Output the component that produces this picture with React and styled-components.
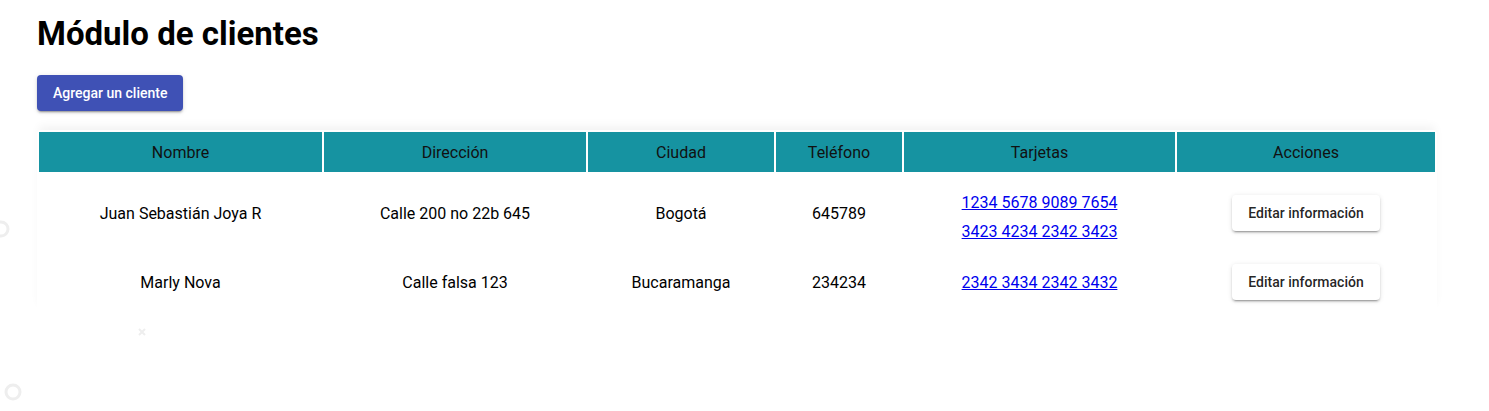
import React from "react";
import styled, { createGlobalStyle } from "styled-components";

const Global = createGlobalStyle`
  html, body { margin: 0; padding: 0; background: #fff; }
  body { font-family: Roboto, "Liberation Sans", sans-serif; color: #000; }
`;

const Page = styled.div`
  position: relative;
  width: 1489px;
  height: 411px;
  overflow: hidden;
  padding: 0 52px 0 37px;
  box-sizing: border-box;
`;

const Title = styled.h1`
  margin: 14px 0 0;
  font-size: 33px;
  font-weight: 700;
  line-height: 40px;
  letter-spacing: 0;
`;

const PrimaryButton = styled.button`
  margin-top: 21px;
  height: 36px;
  padding: 0 16px;
  border: none;
  border-radius: 4px;
  background: #3f51b5;
  color: #fff;
  font-family: Roboto, "Liberation Sans", sans-serif;
  font-size: 14px;
  font-weight: 500;
  box-shadow: 0 3px 1px -2px rgba(0,0,0,0.2), 0 2px 2px 0 rgba(0,0,0,0.14), 0 1px 5px 0 rgba(0,0,0,0.12);
  cursor: pointer;
`;

const Paper = styled.div`
  margin-top: 19px;
  width: 1400px;
  border-radius: 4px;
  background: #fff;
  box-shadow: 0 -6px 10px -2px rgba(0,0,0,0.05);
`;

const Table = styled.table`
  width: 100%;
  border-collapse: separate;
  border-spacing: 2px;
  table-layout: fixed;
`;

const HeadCell = styled.th`
  height: 40px;
  padding: 0;
  background: #1693a1;
  color: #111;
  font-size: 16px;
  font-weight: 400;
  text-align: center;
`;

const Cell = styled.td`
  padding: 10px 8px;
  font-size: 16px;
  text-align: center;
  vertical-align: middle;
  color: #000;
`;

const Cards = styled.div`
  display: flex;
  flex-direction: column;
  align-items: center;
  gap: 5px;
  padding-top: ${(p) => (p.$multi ? 7 : 2)}px;
  margin-bottom: ${(p) => (p.$multi ? -2 : 0)}px;
`;

const CardLink = styled.a`
  color: #0000ee;
  text-decoration: underline;
  line-height: 24px;
  font-size: 16px;
`;

const EditButton = styled.button`
  height: 36px;
  padding: 0 16px;
  border: none;
  border-radius: 4px;
  background: #fff;
  color: rgba(0,0,0,0.87);
  font-family: Roboto, "Liberation Sans", sans-serif;
  font-size: 14px;
  font-weight: 500;
  box-shadow: 0 3px 1px -2px rgba(0,0,0,0.2), 0 2px 2px 0 rgba(0,0,0,0.14), 0 1px 5px 0 rgba(0,0,0,0.12);
  cursor: pointer;
`;

const Deco = styled.svg`
  position: absolute;
  left: ${(p) => p.$x}px;
  top: ${(p) => p.$y}px;
  pointer-events: none;
`;

const columns = [
  { label: "Nombre", width: 283 },
  { label: "Dirección", width: 262 },
  { label: "Ciudad", width: 186 },
  { label: "Teléfono", width: 126 },
  { label: "Tarjetas", width: 271 },
  { label: "Acciones", width: 258 },
];

const clients = [
  {
    name: "Juan Sebastián Joya R",
    address: "Calle 200 no 22b 645",
    city: "Bogotá",
    phone: "645789",
    cards: ["1234 5678 9089 7654", "3423 4234 2342 3423"],
  },
  {
    name: "Marly Nova",
    address: "Calle falsa 123",
    city: "Bucaramanga",
    phone: "234234",
    cards: ["2342 3434 2342 3432"],
  },
];

export default function App() {
  return (
    <Page>
      <Global />
      <Deco $x={-9} $y={219} width="20" height="20" viewBox="0 0 20 20">
        <circle cx="10" cy="10" r="7" fill="none" stroke="#eeeeee" strokeWidth="3" />
      </Deco>
      <Deco $x={3} $y={382} width="20" height="20" viewBox="0 0 20 20">
        <circle cx="10" cy="10" r="7" fill="none" stroke="#eeeeee" strokeWidth="3" />
      </Deco>
      <Deco $x={137} $y={327} width="10" height="10" viewBox="0 0 10 10">
        <path d="M2 2 L8 8 M8 2 L2 8" stroke="#eeeeee" strokeWidth="2" />
      </Deco>

      <Title>Módulo de clientes</Title>
      <PrimaryButton>Agregar un cliente</PrimaryButton>
      <Paper>
        <Table>
          <colgroup>
            {columns.map((c) => (
              <col key={c.label} style={{ width: c.width }} />
            ))}
          </colgroup>
          <thead>
            <tr>
              {columns.map((c) => (
                <HeadCell key={c.label}>{c.label}</HeadCell>
              ))}
            </tr>
          </thead>
          <tbody>
            {clients.map((cl) => (
              <tr key={cl.name}>
                <Cell>{cl.name}</Cell>
                <Cell>{cl.address}</Cell>
                <Cell>{cl.city}</Cell>
                <Cell>{cl.phone}</Cell>
                <Cell>
                  <Cards $multi={cl.cards.length > 1}>
                    {cl.cards.map((n) => (
                      <CardLink key={n} href="#">{n}</CardLink>
                    ))}
                  </Cards>
                </Cell>
                <Cell>
                  <EditButton>Editar información</EditButton>
                </Cell>
              </tr>
            ))}
          </tbody>
        </Table>
      </Paper>
    </Page>
  );
}
